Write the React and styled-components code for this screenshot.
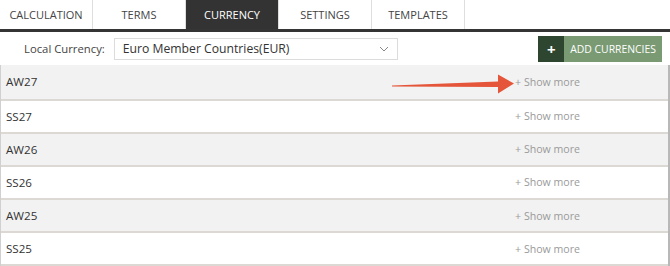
import React from "react";
import styled, { createGlobalStyle } from "styled-components";

const GlobalStyle = createGlobalStyle`
    body {
        margin: 0;
        background: #fff;
        font-family: "Open Sans", "Liberation Sans", sans-serif;
    }
`;

const Page = styled.div`
    width: 670px;
    height: 266px;
    overflow: hidden;
`;

const Tabs = styled.div`
    display: flex;
    height: 29px;
    border-bottom: 3px solid #353535;
`;

const Tab = styled.div`
    width: 93px;
    display: flex;
    align-items: center;
    justify-content: center;
    font-size: 11px;
    color: ${(props) => (props.active ? "#ffffff" : "#444")};
    background: ${(props) => (props.active ? "#333333" : "#fff")};
    border-right: 1px solid #dedede;
    box-sizing: border-box;
    text-transform: uppercase;
`;

const Toolbar = styled.div`
    display: flex;
    align-items: center;
    height: 33px;
    padding: 0 8px 0 24px;
`;

const Label = styled.span`
    font-size: 11.3px;
    color: #444;
    margin-right: 9px;
`;

const Select = styled.div`
    width: 284px;
    height: 22px;
    box-sizing: border-box;
    border: 1px solid #dcdcdc;
    display: flex;
    align-items: center;
    justify-content: space-between;
    padding: 0 8px 0 8px;
    font-size: 12.2px;
    color: #333;
`;

const AddButton = styled.div`
    margin-left: auto;
    display: flex;
    height: 26px;
    font-size: 10.4px;
    text-transform: uppercase;
`;

const PlusBox = styled.div`
    width: 26px;
    background: #2e4630;
    color: #fff;
    display: flex;
    align-items: center;
    justify-content: center;
    font-size: 15px;
    font-weight: 700;
`;

const ButtonText = styled.div`
    background: #7a9a73;
    color: #fff;
    display: flex;
    align-items: center;
    padding: 0 6px;
`;

const List = styled.div`
    position: relative;
    border-left: 1px solid #d0d0d0;
    border-right: 2px solid #b8b8b8;
`;

const Row = styled.div`
    height: 33.2px;
    box-sizing: border-box;
    display: flex;
    align-items: center;
    justify-content: space-between;
    padding: 0 88px 0 5px;
    background: ${(props) => (props.shaded ? "#f2f2f2" : "#fff")};
    border-bottom: 2px solid #dcd9d5;

    &:first-child {
        height: 35.5px;
    }
`;

const Season = styled.span`
    font-size: 11.6px;
    color: #333;
`;

const ShowMore = styled.span`
    font-size: 10.6px;
    color: #9a9a9a;
`;

const Arrow = styled.svg`
    position: absolute;
    left: 0;
    top: 0;
    pointer-events: none;
`;

const tabs = ["Calculation", "Terms", "Currency", "Settings", "Templates"];
const seasons = ["AW27", "SS27", "AW26", "SS26", "AW25", "SS25"];

export default function App() {
    return (
        <Page>
            <GlobalStyle />
            <Tabs>
                {tabs.map((t) => (
                    <Tab key={t} active={t === "Currency"}>
                        {t}
                    </Tab>
                ))}
            </Tabs>
            <Toolbar>
                <Label>Local Currency:</Label>
                <Select>
                    <span>Euro Member Countries(EUR)</span>
                    <svg width="10" height="6" viewBox="0 0 10 6">
                        <path d="M1 1 L5 5 L9 1" fill="none" stroke="#888" strokeWidth="1" />
                    </svg>
                </Select>
                <AddButton>
                    <PlusBox>+</PlusBox>
                    <ButtonText>Add Currencies</ButtonText>
                </AddButton>
            </Toolbar>
            <List>
                {seasons.map((s, i) => (
                    <Row key={s} shaded={i % 2 === 0}>
                        <Season>{s}</Season>
                        <ShowMore>+ Show more</ShowMore>
                    </Row>
                ))}
                <Arrow width="670" height="40">
                    <polygon
                        points="391,20.5 497,16.5 497,9.5 513,18.5 497,28.5 497,22 391,21.5"
                        fill="#e5553a"
                    />
                </Arrow>
            </List>
        </Page>
    );
}
